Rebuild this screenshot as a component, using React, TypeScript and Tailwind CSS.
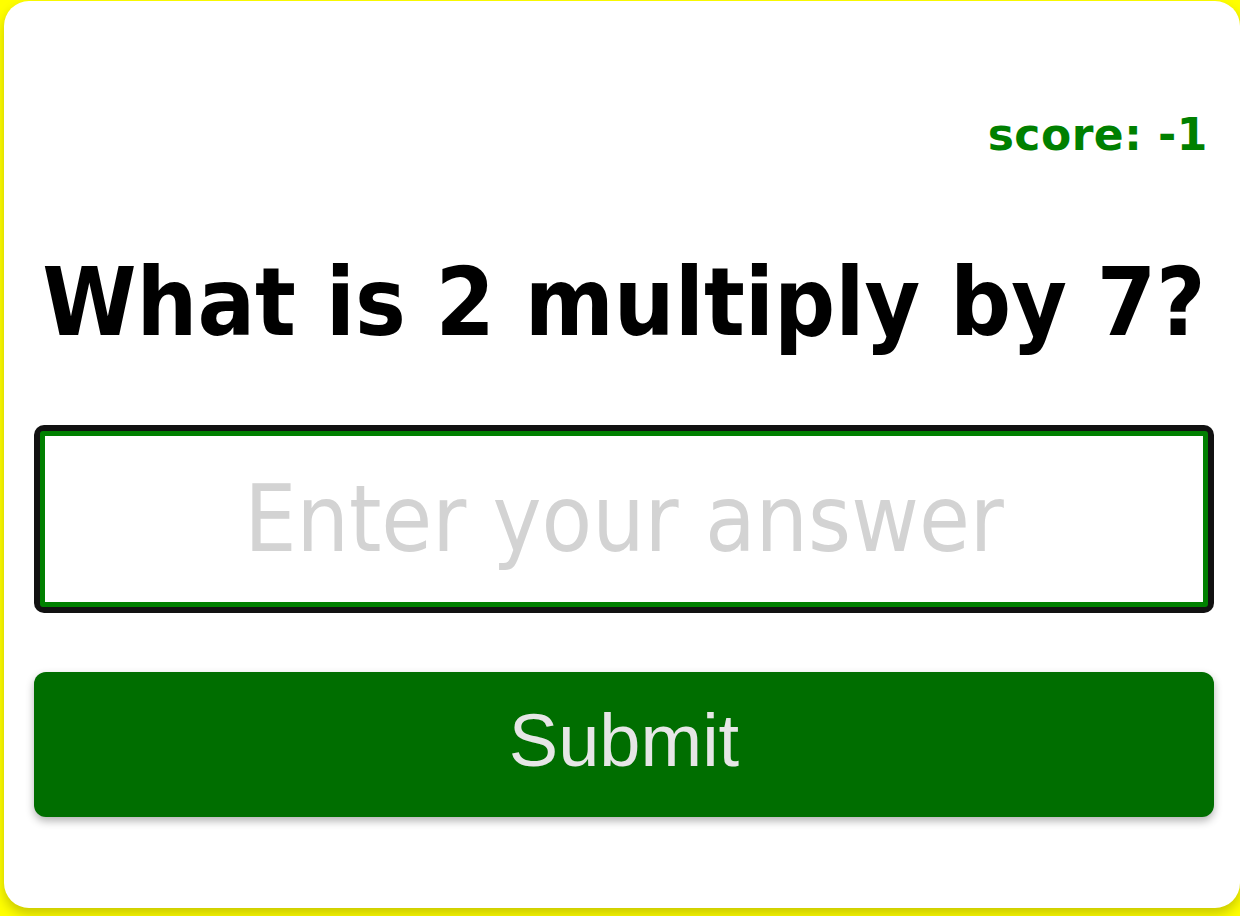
import { useState } from "react";

export default function App() {
  const [answer, setAnswer] = useState("");
  const score = -1;

  return (
    <div className="min-h-[916px] w-full overflow-hidden bg-[#ffff00]">
      <div className="ml-[4px] mt-[1px] flex h-[907px] w-[1236px] flex-col rounded-[25px] bg-white pl-[30px] pr-[26px] pt-[112px] font-['Comic_Sans_MS','DejaVu_Sans_Condensed','DejaVu_Sans',sans-serif] shadow-[0_6px_12px_rgba(0,0,0,0.22)]">
        {/* score */}
        <p className="pr-[6px] text-right font-['Comic_Sans_MS','DejaVu_Sans',sans-serif] text-[44px] font-bold leading-none tracking-[0.5px] text-[#008000]">
          score: {score}
        </p>

        {/* question */}
        <h1 className="mt-[98px] text-center text-[95px] font-bold leading-none text-black">
          What is 2 multiply by 7?
        </h1>

        {/* answer box */}
        <div className="mt-[75px] rounded-[10px] bg-[#111111] p-[6px]">
          <input
            type="text"
            value={answer}
            onChange={(e) => setAnswer(e.target.value)}
            placeholder="Enter your answer"
            className="block h-[176px] w-full rounded-[3px] border-[5px] border-[#008000] bg-white text-center font-['Comic_Sans_MS','DejaVu_Sans_Condensed','DejaVu_Sans',sans-serif] text-[92px] text-black outline-none placeholder:text-[#d3d3d3]"
          />
        </div>

        {/* submit */}
        <button
          type="button"
          className="mt-[59px] h-[145px] w-full rounded-[12px] bg-[#006e00] pb-[8px] font-['Liberation_Sans',Arial,sans-serif] text-[74px] text-[#e6e6e6] shadow-[0_4px_8px_rgba(0,0,0,0.3)]"
        >
          Submit
        </button>
      </div>
    </div>
  );
}
